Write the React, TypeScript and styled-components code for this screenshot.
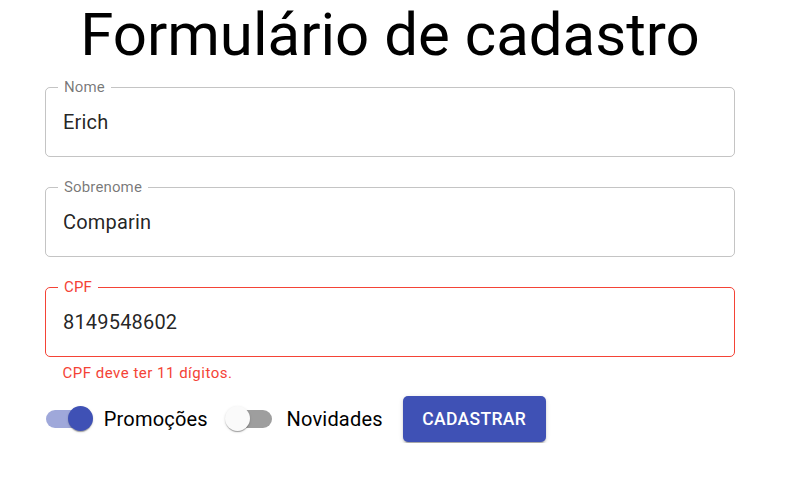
import styled, { createGlobalStyle } from 'styled-components';

const primary = '#3f51b5';
const error = '#f44336';

const GlobalStyle = createGlobalStyle`
    html, body {
        margin: 0;
        padding: 0;
        background: #fff;
        font-family: Roboto, "Liberation Sans", Arial, sans-serif;
    }
`;

const Page = styled.form`
    width: 690px;
    margin-left: 45px;
    padding-top: 2px;
`;

const Title = styled.h1`
    margin: 0;
    font-size: 60px;
    font-weight: 400;
    line-height: 66px;
    text-align: center;
    color: #000;
    letter-spacing: 0;
`;

const Field = styled.div<{ $first?: boolean }>`
    margin-top: ${p => (p.$first ? '19px' : '30px')};
`;

const Outline = styled.div<{ $error?: boolean }>`
    position: relative;
    height: 70px;
    box-sizing: border-box;
    border: 1px solid ${p => (p.$error ? error : 'rgba(0, 0, 0, 0.23)')};
    border-radius: 5px;
    display: flex;
    align-items: center;
    padding-left: 17px;
`;

const Label = styled.label<{ $error?: boolean }>`
    position: absolute;
    top: -10px;
    left: 12px;
    padding: 0 6px;
    background: #fff;
    font-size: 15px;
    line-height: 18px;
    letter-spacing: 0.00938em;
    color: ${p => (p.$error ? error : 'rgba(0, 0, 0, 0.54)')};
`;

const Value = styled.span`
    font-size: 20px;
    line-height: 24px;
    letter-spacing: 0.00938em;
    color: rgba(0, 0, 0, 0.87);
`;

const Helper = styled.p`
    margin: 4px 0 0 17.5px;
    font-size: 15px;
    line-height: 25px;
    letter-spacing: 0.03333em;
    color: ${error};
`;

const Controls = styled.div`
    display: flex;
    align-items: center;
    margin-top: 9px;
`;

const SwitchLabel = styled.label`
    display: inline-flex;
    align-items: center;
    margin-left: -13.75px;
    margin-right: 20px;
    font-size: 20px;
    line-height: 30px;
    letter-spacing: 0.00938em;
    color: #000;
`;

const SwitchRoot = styled.span`
    position: relative;
    width: 72.5px;
    height: 47.5px;
    padding: 15px;
    box-sizing: border-box;
    flex-shrink: 0;
    display: inline-flex;
`;

const Track = styled.span<{ $on?: boolean }>`
    width: 100%;
    height: 100%;
    border-radius: 9px;
    background: ${p => (p.$on ? primary : '#000')};
    opacity: ${p => (p.$on ? 0.5 : 0.38)};
`;

const Thumb = styled.span<{ $on?: boolean }>`
    position: absolute;
    top: 11.25px;
    left: ${p => (p.$on ? '36.25px' : '11.25px')};
    width: 25px;
    height: 25px;
    border-radius: 50%;
    background: ${p => (p.$on ? primary : '#fafafa')};
    box-shadow: 0px 2px 1px -1px rgba(0, 0, 0, 0.2), 0px 1px 1px 0px rgba(0, 0, 0, 0.14),
        0px 1px 3px 0px rgba(0, 0, 0, 0.12);
`;

const SubmitButton = styled.button`
    width: 143px;
    height: 45.5px;
    padding: 0;
    border: none;
    border-radius: 5px;
    background: ${primary};
    color: #fff;
    font-family: Roboto, "Liberation Sans", Arial, sans-serif;
    font-size: 17.5px;
    font-weight: 500;
    letter-spacing: 0.02em;
    text-transform: uppercase;
    box-shadow: 0px 3px 1px -2px rgba(0, 0, 0, 0.2), 0px 2px 2px 0px rgba(0, 0, 0, 0.14),
        0px 1px 5px 0px rgba(0, 0, 0, 0.12);
    cursor: pointer;
`;

function Toggle({ on, label }: { on?: boolean; label: string }) {
    return (
        <SwitchLabel>
            <SwitchRoot>
                <Track $on={on} />
                <Thumb $on={on} />
            </SwitchRoot>
            <span>{label}</span>
        </SwitchLabel>
    );
}

export default function App() {
    return (
        <>
            <GlobalStyle />
            <Page onSubmit={e => e.preventDefault()}>
                <Title>Formulário de cadastro</Title>
                <Field $first>
                    <Outline>
                        <Label>Nome</Label>
                        <Value>Erich</Value>
                    </Outline>
                </Field>
                <Field>
                    <Outline>
                        <Label>Sobrenome</Label>
                        <Value>Comparin</Value>
                    </Outline>
                </Field>
                <Field>
                    <Outline $error>
                        <Label $error>CPF</Label>
                        <Value>8149548602</Value>
                    </Outline>
                    <Helper>CPF deve ter 11 dígitos.</Helper>
                </Field>
                <Controls>
                    <Toggle on label="Promoções" />
                    <Toggle label="Novidades" />
                    <SubmitButton type="submit">Cadastrar</SubmitButton>
                </Controls>
            </Page>
        </>
    );
}
